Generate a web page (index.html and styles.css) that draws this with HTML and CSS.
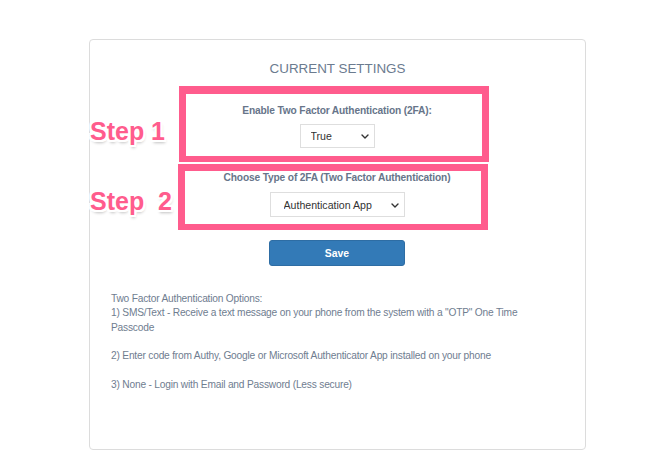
FILE: index.html
```html
<!DOCTYPE html>
<html lang="en">
<head>
<meta charset="utf-8">
<title>Current Settings</title>
<link rel="stylesheet" href="styles.css">
</head>
<body>
<div class="card">
  <h2 class="title">CURRENT SETTINGS</h2>

  <div class="group group-one">
    <label class="label" for="enable2fa">Enable Two Factor Authentication (2FA):</label>
    <div class="select-wrap select-short">
      <select id="enable2fa" class="select">
        <option>True</option>
        <option>False</option>
      </select>
      <svg class="chev" width="8" height="5" viewBox="0 0 8 5"><path d="M1 1 L4 4 L7 1" fill="none" stroke="#333" stroke-width="1.4" stroke-linecap="round" stroke-linejoin="round"/></svg>
    </div>
  </div>

  <div class="group group-two">
    <label class="label" for="type2fa">Choose Type of 2FA (Two Factor Authentication)</label>
    <div class="select-wrap select-long">
      <select id="type2fa" class="select">
        <option>Authentication App</option>
        <option>SMS/Text</option>
        <option>None</option>
      </select>
      <svg class="chev" width="8" height="5" viewBox="0 0 8 5"><path d="M1 1 L4 4 L7 1" fill="none" stroke="#333" stroke-width="1.4" stroke-linecap="round" stroke-linejoin="round"/></svg>
    </div>
  </div>

  <button class="save" type="button">Save</button>

  <div class="info">
    <p>Two Factor Authentication Options:<br>1) SMS/Text - Receive a text message on your phone from the system with a "OTP" One Time Passcode</p>
    <p>2) Enter code from Authy, Google or Microsoft Authenticator App installed on your phone</p>
    <p>3) None - Login with Email and Password (Less secure)</p>
  </div>

  <div class="step step-one">Step 1</div>
  <div class="step step-two">Step&nbsp;&nbsp;2</div>
</div>
</body>
</html>
```

FILE: styles.css
```css
* { box-sizing: border-box; }

html, body {
  margin: 0;
  padding: 0;
  background: #ffffff;
}

body {
  font-family: "Liberation Sans", Arial, Helvetica, sans-serif;
  padding-top: 39px;
}

.card {
  position: relative;
  margin-left: 89px;
  width: 497px;
  height: 411px;
  border: 1px solid #dcdcdc;
  border-radius: 4px;
  padding: 21px 21px 0 0;
  display: flex;
  flex-direction: column;
  align-items: flex-start;
}

.title {
  align-self: stretch;
  margin: 0 0 9px 21px;
  font-size: 13.4px;
  line-height: 16px;
  font-weight: normal;
  color: #6b7b8f;
  text-align: center;
}

.group {
  width: 310px;
  margin-left: 89px;
  border: 7px solid #ff5c8d;
  border-bottom-width: 6px;
  display: flex;
  flex-direction: column;
  align-items: center;
}

.group-one {
  height: 76px;
  padding: 10px 0 0 6px;
  border-top-width: 8px;
}

.group-two {
  margin-top: 2px;
  margin-left: 88px;
  height: 66px;
  padding: 0 0 0 8px;
}

.label {
  display: block;
  font-size: 10.2px;
  letter-spacing: -0.15px;
  line-height: 13px;
  font-weight: bold;
  color: #67758a;
  text-align: center;
  white-space: nowrap;
}

.group-one .label { margin-bottom: 7px; }
.group-two .label { margin-bottom: 8px; }

.select-wrap {
  position: relative;
}

.select-short { width: 75px; height: 24px; }
.select-long { width: 135px; height: 25px; }

.select {
  -webkit-appearance: none;
  appearance: none;
  width: 100%;
  height: 100%;
  border: 1px solid #dedede;
  border-radius: 0;
  background: #ffffff;
  font-family: "Liberation Sans", Arial, Helvetica, sans-serif;
  font-size: 10.6px;
  color: #333333;
  padding: 0 0 0 10px;
  margin: 0;
  outline: none;
}

.select-long .select { padding-left: 13px; }

.chev {
  position: absolute;
  right: 6px;
  top: 50%;
  margin-top: -2px;
  pointer-events: none;
}

.save {
  margin: 10px 0 0 179px;
  width: 136px;
  height: 26px;
  background: #337ab7;
  border: 1px solid #2e6da4;
  border-radius: 3px;
  color: #ffffff;
  font-family: "Liberation Sans", Arial, Helvetica, sans-serif;
  font-size: 10.4px;
  font-weight: bold;
  padding: 0;
}

.info {
  width: 440px;
  margin: 26px 0 0 21px;
  font-size: 10.2px;
  letter-spacing: -0.2px;
  line-height: 14.3px;
  color: #6f7d90;
}

.info p {
  margin: 0 0 14.3px 0;
}

.step {
  position: absolute;
  left: 0;
  font-family: "Liberation Sans", Arial, Helvetica, sans-serif;
  font-weight: bold;
  font-size: 25px;
  line-height: 25px;
  color: #ff5c8d;
  white-space: nowrap;
  text-shadow:
    -2px -2px 0 #fff, 2px -2px 0 #fff, -2px 2px 0 #fff, 2px 2px 0 #fff,
    0 -2px 0 #fff, 0 2px 0 #fff, -2px 0 0 #fff, 2px 0 0 #fff,
    1px 3px 3px rgba(0, 0, 0, 0.25);
}

.step-one { top: 79px; }
.step-two { top: 149px; }
```
